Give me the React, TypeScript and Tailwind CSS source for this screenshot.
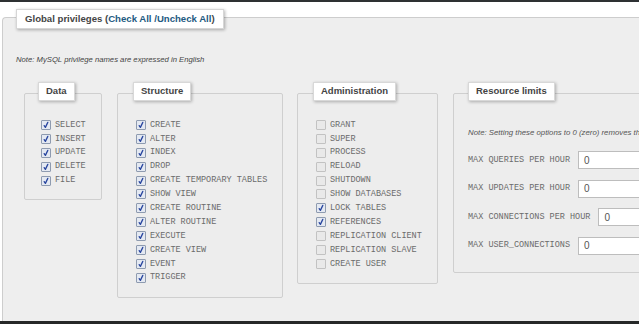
import React from "react";

const sans = { fontFamily: '"Liberation Sans", Arial, sans-serif' };

function Box({ checked }: { checked: boolean }) {
  return checked ? (
    <span className="flex h-[10px] w-[10px] shrink-0 items-center justify-center border border-[#8e9bb0] bg-[#e4e9f2] rounded-[1px]">
      <svg width="8" height="8" viewBox="0 0 8 8">
        <path d="M2.2 4.6 L3.4 6.4 L5.8 1.4" fill="none" stroke="#2b48a0" strokeWidth="1.3" strokeLinecap="round" strokeLinejoin="round" />
      </svg>
    </span>
  ) : (
    <span className="block h-[10px] w-[10px] shrink-0 border border-[#c2c2c2] bg-[#e9e9e9] rounded-[1px]" />
  );
}

function Row({ label, checked }: { label: string; checked: boolean }) {
  return (
    <div className="flex h-[13.9px] items-center gap-[4px]">
      <Box checked={checked} />
      <span className="whitespace-pre text-[8.5px] leading-none text-[#6b6b6b] font-['Liberation_Mono',monospace]">{label}</span>
    </div>
  );
}

function Legend({ children, cls }: { children: React.ReactNode; cls: string }) {
  return (
    <div
      style={sans}
      className={"flex h-[19px] self-start items-center px-[7px] bg-white border border-[#d8d8d8] shadow-[1px_1px_3px_rgba(0,0,0,0.28)] text-[9.5px] font-bold text-[#444] -mt-[12px] " + cls}
    >
      {children}
    </div>
  );
}

function Group({ title, items, w, ml, lml, pl }: { title: string; items: [string, boolean][]; w: string; ml: string; lml: string; pl: string }) {
  return (
    <div className={"flex flex-col border border-[#cfcfcf] rounded-[2px] bg-[#ededed] pb-[12px] " + w + " " + ml}>
      <Legend cls={lml}>{title}</Legend>
      <div className={"mt-[17px] flex flex-col " + pl}>
        {items.map(([l, c]) => (
          <Row key={l} label={l} checked={c} />
        ))}
      </div>
    </div>
  );
}

function Limit({ label, ml = "mt-[10.5px]" }: { label: string; ml?: string }) {
  return (
    <div className={"flex h-[18px] items-center " + ml}>
      <span className="whitespace-pre text-[8.5px] leading-none text-[#6b6b6b] font-['Liberation_Mono',monospace]">{label}</span>
      <div style={sans} className="ml-[8px] flex h-[18px] w-[160px] items-center border border-[#bdbdbd] bg-white pl-[5px] text-[10px] text-[#555]">
        0
      </div>
    </div>
  );
}

export default function App() {
  const data: [string, boolean][] = [
    ["SELECT", true],
    ["INSERT", true],
    ["UPDATE", true],
    ["DELETE", true],
    ["FILE", true],
  ];
  const structure: [string, boolean][] = [
    ["CREATE", true],
    ["ALTER", true],
    ["INDEX", true],
    ["DROP", true],
    ["CREATE TEMPORARY TABLES", true],
    ["SHOW VIEW", true],
    ["CREATE ROUTINE", true],
    ["ALTER ROUTINE", true],
    ["EXECUTE", true],
    ["CREATE VIEW", true],
    ["EVENT", true],
    ["TRIGGER", true],
  ];
  const admin: [string, boolean][] = [
    ["GRANT", false],
    ["SUPER", false],
    ["PROCESS", false],
    ["RELOAD", false],
    ["SHUTDOWN", false],
    ["SHOW DATABASES", false],
    ["LOCK TABLES", true],
    ["REFERENCES", true],
    ["REPLICATION CLIENT", false],
    ["REPLICATION SLAVE", false],
    ["CREATE USER", false],
  ];
  return (
    <div className="flex h-[324px] w-[639px] flex-col overflow-hidden bg-white" style={sans}>
      <div className="h-[1.5px] shrink-0 bg-[#2e3133]" />
      <div className="h-[15.5px] shrink-0 bg-white" />
      <div className="ml-[2px] flex w-[720px] flex-1 flex-col border-l border-t border-[#cdcdcd] rounded-tl-[4px] bg-[#eeeeee]">
        <div className="flex h-[20px] self-start items-center ml-[13px] -mt-[9px] px-[8px] bg-white border border-[#d6d6d6] shadow-[1px_1px_3px_rgba(0,0,0,0.3)] text-[9.6px] font-bold text-[#444]">
          Global privileges (<span className="text-[#235a81]">Check All</span>&nbsp;<span className="text-[#235a81]">/Uncheck All</span>)
        </div>
        <div className="ml-[13px] mt-[26px] h-[10px] text-[7.7px] leading-[10px] italic text-[#444]">
          Note: MySQL privilege names are expressed in English
        </div>
        <div className="mt-[28px] flex items-start">
          <Group title="Data" items={data} w="w-[78px]" ml="ml-[21px]" lml="ml-[13px]" pl="pl-[16px]" />
          <Group title="Structure" items={structure} w="w-[166px]" ml="ml-[15px]" lml="ml-[15px]" pl="pl-[18px]" />
          <Group title="Administration" items={admin} w="w-[141px]" ml="ml-[14px]" lml="ml-[15px]" pl="pl-[18px]" />
          <div className="ml-[15px] flex w-[260px] flex-col border border-[#cfcfcf] rounded-[2px] bg-[#ededed] pb-[17px]">
            <Legend cls="ml-[14px]">Resource limits</Legend>
            <div className="ml-[14px] mt-[27px] h-[10px] whitespace-nowrap text-[7.8px] leading-[10px] italic text-[#555]">
              Note: Setting these options to 0 (zero) removes the limit.
            </div>
            <div className="ml-[14px] mt-[13px] flex flex-col">
              <Limit label="MAX QUERIES PER HOUR" ml="" />
              <Limit label="MAX UPDATES PER HOUR" />
              <Limit label="MAX CONNECTIONS PER HOUR" />
              <Limit label="MAX USER_CONNECTIONS" />
            </div>
          </div>
        </div>
      </div>
      <div className="h-[3px] shrink-0 bg-[#262828]" />
    </div>
  );
}
